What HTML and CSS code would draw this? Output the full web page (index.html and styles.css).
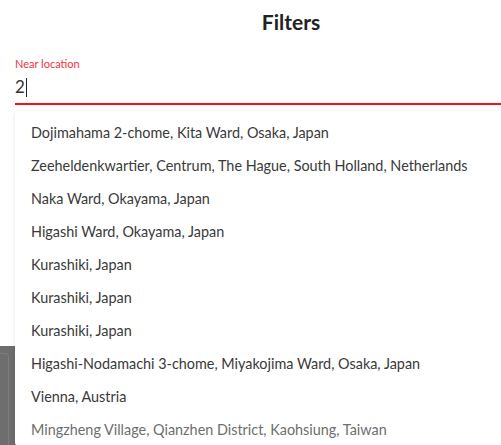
FILE: index.html
```html
<!DOCTYPE html>
<html lang="en">
<head>
    <meta charset="UTF-8">
    <meta name="viewport" content="width=device-width, initial-scale=1.0">
    <title>Filters</title>
    <link rel="stylesheet" href="styles.css">
</head>
<body>
    <div class="page">
        <div class="filters">
            <h1 class="title">Filters</h1>
            <div class="field">
                <label class="field-label">Near location</label>
                <div class="field-input">2<span class="caret"></span></div>
                <ul class="suggestions">
                    <li>Dojimahama 2-chome, Kita Ward, Osaka, Japan</li>
                    <li>Zeeheldenkwartier, Centrum, The Hague, South Holland, Netherlands</li>
                    <li>Naka Ward, Okayama, Japan</li>
                    <li>Higashi Ward, Okayama, Japan</li>
                    <li>Kurashiki, Japan</li>
                    <li>Kurashiki, Japan</li>
                    <li>Kurashiki, Japan</li>
                    <li>Higashi-Nodamachi 3-chome, Miyakojima Ward, Osaka, Japan</li>
                    <li>Vienna, Austria</li>
                    <li class="faded">Mingzheng Village, Qianzhen District, Kaohsiung, Taiwan</li>
                </ul>
            </div>
            <div class="results">
                <div class="result-card">
                    <div class="result-inner"></div>
                </div>
            </div>
        </div>
    </div>
</body>
</html>
```

FILE: styles.css
```css
* {
    margin: 0;
    padding: 0;
    box-sizing: border-box;
}

body {
    margin: 0;
    background-color: #ffffff;
    font-family: Lato, "Open Sans", sans-serif;
    color: #333333;
}

.page {
    width: 501px;
    height: 445px;
    overflow: hidden;
}

.filters {
    width: 567px;
    padding-left: 15px;
}

.title {
    text-align: center;
    font-size: 21px;
    font-weight: 700;
    color: #222222;
    padding-top: 9px;
    height: 56px;
}

.field {
    position: relative;
}

.field-label {
    display: block;
    font-size: 11px;
    color: #f5323c;
    height: 15px;
    line-height: 15px;
}

.field-input {
    height: 34px;
    font-size: 17px;
    line-height: 34px;
    color: #333333;
    border-bottom: 2px solid #f0141e;
    display: flex;
    align-items: center;
}

.caret {
    display: inline-block;
    width: 1px;
    height: 19px;
    background-color: #222222;
    margin-left: 1px;
}

.suggestions {
    position: absolute;
    left: 0;
    top: 55px;
    width: 552px;
    list-style: none;
    background-color: #ffffff;
    padding-top: 5px;
    border-radius: 4px;
    box-shadow: 0 1px 4px rgba(0, 0, 0, 0.12);
    z-index: 10;
}

.suggestions li {
    height: 33px;
    line-height: 33px;
    padding-left: 16px;
    font-size: 14.4px;
    color: #3a3a3a;
    white-space: nowrap;
}

.suggestions li.faded {
    color: #6e6e6e;
}

.results {
    margin-left: -15px;
    margin-top: 241px;
}

.result-card {
    width: 300px;
    height: 120px;
    background-color: #6e6e6e;
    padding-top: 7px;
}

.result-inner {
    width: 9px;
    height: 120px;
    border-right: 1px solid #7c7c7c;
    border-top: 1px solid #7c7c7c;
    border-top-right-radius: 4px;
}
```
